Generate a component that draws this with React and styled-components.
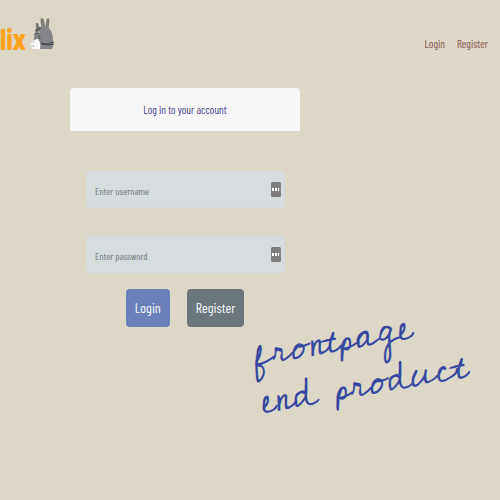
import React from "react";
import styled, { createGlobalStyle } from "styled-components";

const GlobalStyle = createGlobalStyle`
  * { box-sizing: border-box; }
  body {
    margin: 0;
    background: #dcd7c7;
    font-family: "Barlow Condensed", "Liberation Sans Narrow", "Roboto Condensed", "Liberation Sans", sans-serif;
  }
`;

const Page = styled.div`
  min-height: 100vh;
  overflow: hidden;
`;

const Header = styled.header`
  display: flex;
  align-items: center;
  justify-content: space-between;
  height: 88px;
  padding: 0 12px 0 0;
`;

const Brand = styled.a`
  display: flex;
  align-items: center;
  gap: 4px;
  padding-bottom: 12px;
  color: #ffa31f;
  font-size: 30px;
  font-weight: 700;
  line-height: 40px;
  text-decoration: none;
`;

const Mascot = styled.svg`
  width: 26px;
  height: 36px;
  margin-bottom: 8px;
`;

const Nav = styled.nav`
  display: flex;
  gap: 12px;
`;

const NavLink = styled.a`
  color: #855650;
  font-size: 11px;
  line-height: 16px;
  text-decoration: none;
`;

const Card = styled.form`
  width: 46%;
  margin-left: 14%;
`;

const CardTitle = styled.h1`
  margin: 0;
  padding: 14px 8px 13px;
  border-radius: 4px 4px 0 0;
  background: #f7f7f7;
  color: #45418d;
  font-size: 11px;
  font-weight: 400;
  line-height: 16px;
  text-align: center;
`;

const Fields = styled.div`
  display: grid;
  gap: 28px;
  padding: 40px 15px 16px 16px;
`;

const Field = styled.label`
  display: flex;
  align-items: center;
  height: 37px;
  padding: 0 3px 0 8px;
  border: 1px solid #d3dadd;
  border-radius: 3px;
  background: #d7dcde;
`;

const TextInput = styled.input`
  flex: 1;
  min-width: 0;
  padding: 3px 0 0;
  border: 0;
  outline: 0;
  background: transparent;
  color: #4f5860;
  font-family: inherit;
  font-size: 10px;
  line-height: 16px;

  &::placeholder {
    color: #6f777f;
    opacity: 1;
  }
`;

const KeyBadge = styled.svg`
  width: 10px;
  height: 15px;
`;

const Actions = styled.div`
  display: flex;
  justify-content: center;
  gap: 17px;
`;

const Button = styled.button`
  height: 38px;
  padding: 0 9px;
  border: 0;
  border-radius: 4px;
  background: ${({ $primary }) => ($primary ? "#6a80b9" : "#6b767d")};
  color: #f8f9fa;
  font-family: inherit;
  font-size: 14px;
  line-height: 24px;
`;

const Note = styled.p`
  width: 44%;
  margin: -16px 0 0 51%;
  color: #3547a0;
  font-family: "Cedarville Cursive", Lato, sans-serif;
  font-size: 41px;
  line-height: 48px;
  white-space: nowrap;
  transform: rotate(-10deg);
`;

const NoteLine = styled.span`
  display: block;
`;

function Totoro() {
  return (
    <Mascot viewBox="0 0 26 36" aria-hidden="true">
      <path d="M7 14 L6 8 Q7 6 8 8 L9 12 M12 12 L11 5 Q11 1 13 3 L15 11 M16 11 L17 4 Q18 1 19 4 L18 12" fill="#85857f" stroke="#60605b" strokeWidth="0.7" />
      <path d="M7 13 Q12 9 18 11 Q23 16 23 24 Q24 30 22 33 L8 33 Q3 29 4 22 Q4 17 7 13Z" fill="#858589" />
      <path d="M5 14 L8 11 L12 11 L10 14 L6 16Z" fill="#656663" />
      <path d="M1 28 Q4 23 8 23 Q11 26 10 33 L4 33 Q-1 31 1 28Z" fill="#fafafa" />
      <path d="M4 19 L6 17 L9 18 M8 20 Q11 20 10 23" fill="none" stroke="#545551" strokeWidth="0.9" />
      <circle cx="9" cy="16" r="0.8" fill="#d8d8d5" />
      <path d="M3 26 L4 27 M1 30 L4 30" stroke="#777" strokeWidth="0.6" />
      <path d="M11 27 L16 28 L24 26 M12 28 L18 29 L24 28" fill="none" stroke="#3e413f" strokeWidth="0.9" />
    </Mascot>
  );
}

function PasswordKey() {
  return (
    <KeyBadge viewBox="0 0 10 15" aria-hidden="true">
      <rect width="10" height="15" rx="1.5" fill="#7d7d7d" />
      <path d="M1 6h2v3H1z M4 6h2v3H4z M7 6h1v3H7z" fill="#fff" />
      <path d="M9 5v5" stroke="#aaa" strokeWidth="0.6" />
    </KeyBadge>
  );
}

export default function App() {
  return (
    <Page>
      <GlobalStyle />
      <Header>
        <Brand href="#home">
          lix
          <Totoro />
        </Brand>
        <Nav>
          <NavLink href="#login">Login</NavLink>
          <NavLink href="#register">Register</NavLink>
        </Nav>
      </Header>
      <main>
        <Card onSubmit={(event) => event.preventDefault()}>
          <CardTitle>Log in to your account</CardTitle>
          <Fields>
            <Field>
              <TextInput type="text" aria-label="Username" placeholder="Enter username" />
              <PasswordKey />
            </Field>
            <Field>
              <TextInput type="password" aria-label="Password" placeholder="Enter password" />
              <PasswordKey />
            </Field>
          </Fields>
          <Actions>
            <Button type="submit" $primary>Login</Button>
            <Button type="button">Register</Button>
          </Actions>
        </Card>
        <Note>
          <NoteLine>frontpage</NoteLine>
          <NoteLine>end product</NoteLine>
        </Note>
      </main>
    </Page>
  );
}
